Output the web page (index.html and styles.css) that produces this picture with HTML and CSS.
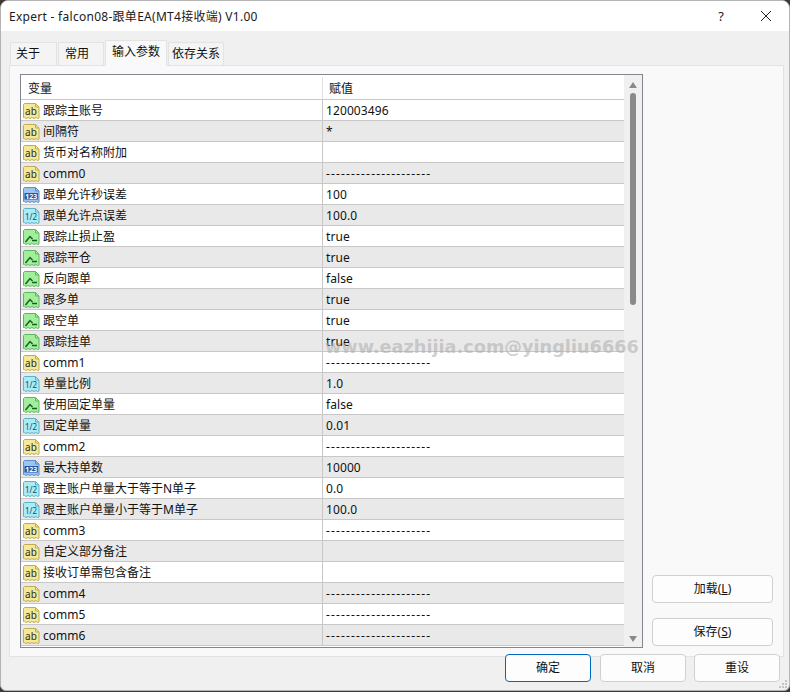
FILE: index.html
```html
<!DOCTYPE html>
<html lang="zh">
<head>
<meta charset="utf-8">
<title>Expert</title>
<link rel="stylesheet" href="styles.css">
</head>
<body>
<svg class="defs" width="0" height="0" aria-hidden="true">
  <defs>
    <symbol id="doc" viewBox="0 0 17 17" overflow="visible">
      <path d="M0.500 1.500L1.500 0.500H12.500L16 4V15L14.500 15.500L13 14.500L11 15.500L9 14.500L7 15.500L5 14.500L3 15.500L1.500 14.500H0.500Z"/>
      <path class="fold" d="M12.500 0.500V4H16"/>
    </symbol>
    <symbol id="curve" viewBox="0 0 17 17" overflow="visible">
      <path class="stroke" d="M2.500 13L7 7.500L9.500 10"/>
      <path class="stroke" d="M9 11.500H14"/>
    </symbol>
  </defs>
</svg>
<div class="window">
  <header class="titlebar">
    <span class="title">Expert - falcon08-跟单EA(MT4接收端) V1.00</span>
    <span class="help">?</span>
    <svg class="close" width="12" height="12" viewBox="0 0 12 12"><path d="M1 1L11 11M11 1L1 11" stroke="#222" stroke-width="1" fill="none"/></svg>
  </header>
  <nav class="tabs">
    <span class="tab tab-a">关于</span>
    <span class="tab tab-b">常用</span>
    <span class="tab tab-active">输入参数</span>
    <span class="tab tab-d">依存关系</span>
  </nav>
  <main class="panel">
    <section class="list">
      <div class="grid">
        <div class="head"><span class="h-name">变量</span><span class="h-value">赋值</span></div>
        <div class="row"><svg class="ic ic-ab" viewBox="0 0 17 17"><use href="#doc"/><text x="8" y="11.500">ab</text></svg><span class="name">跟踪主账号</span><span class="val">120003496</span></div>
        <div class="row"><svg class="ic ic-ab" viewBox="0 0 17 17"><use href="#doc"/><text x="8" y="11.500">ab</text></svg><span class="name">间隔符</span><span class="val">*</span></div>
        <div class="row"><svg class="ic ic-ab" viewBox="0 0 17 17"><use href="#doc"/><text x="8" y="11.500">ab</text></svg><span class="name">货币对名称附加</span><span class="val"></span></div>
        <div class="row"><svg class="ic ic-ab" viewBox="0 0 17 17"><use href="#doc"/><text x="8" y="11.500">ab</text></svg><span class="name">comm0</span><span class="val dash">---------------------</span></div>
        <div class="row"><svg class="ic ic-int" viewBox="0 0 17 17"><use href="#doc"/><rect class="band" x="1.500" y="6" width="13.500" height="6.500"/><text x="8.200" y="11.500">123</text></svg><span class="name">跟单允许秒误差</span><span class="val">100</span></div>
        <div class="row"><svg class="ic ic-dbl" viewBox="0 0 17 17"><use href="#doc"/><text x="8" y="11.500">1/2</text></svg><span class="name">跟单允许点误差</span><span class="val">100.0</span></div>
        <div class="row"><svg class="ic ic-bool" viewBox="0 0 17 17"><use href="#doc"/><use href="#curve"/></svg><span class="name">跟踪止损止盈</span><span class="val">true</span></div>
        <div class="row"><svg class="ic ic-bool" viewBox="0 0 17 17"><use href="#doc"/><use href="#curve"/></svg><span class="name">跟踪平仓</span><span class="val">true</span></div>
        <div class="row"><svg class="ic ic-bool" viewBox="0 0 17 17"><use href="#doc"/><use href="#curve"/></svg><span class="name">反向跟单</span><span class="val">false</span></div>
        <div class="row"><svg class="ic ic-bool" viewBox="0 0 17 17"><use href="#doc"/><use href="#curve"/></svg><span class="name">跟多单</span><span class="val">true</span></div>
        <div class="row"><svg class="ic ic-bool" viewBox="0 0 17 17"><use href="#doc"/><use href="#curve"/></svg><span class="name">跟空单</span><span class="val">true</span></div>
        <div class="row"><svg class="ic ic-bool" viewBox="0 0 17 17"><use href="#doc"/><use href="#curve"/></svg><span class="name">跟踪挂单</span><span class="val">true</span></div>
        <div class="row"><svg class="ic ic-ab" viewBox="0 0 17 17"><use href="#doc"/><text x="8" y="11.500">ab</text></svg><span class="name">comm1</span><span class="val dash">---------------------</span></div>
        <div class="row"><svg class="ic ic-dbl" viewBox="0 0 17 17"><use href="#doc"/><text x="8" y="11.500">1/2</text></svg><span class="name">单量比例</span><span class="val">1.0</span></div>
        <div class="row"><svg class="ic ic-bool" viewBox="0 0 17 17"><use href="#doc"/><use href="#curve"/></svg><span class="name">使用固定单量</span><span class="val">false</span></div>
        <div class="row"><svg class="ic ic-dbl" viewBox="0 0 17 17"><use href="#doc"/><text x="8" y="11.500">1/2</text></svg><span class="name">固定单量</span><span class="val">0.01</span></div>
        <div class="row"><svg class="ic ic-ab" viewBox="0 0 17 17"><use href="#doc"/><text x="8" y="11.500">ab</text></svg><span class="name">comm2</span><span class="val dash">---------------------</span></div>
        <div class="row"><svg class="ic ic-int" viewBox="0 0 17 17"><use href="#doc"/><rect class="band" x="1.500" y="6" width="13.500" height="6.500"/><text x="8.200" y="11.500">123</text></svg><span class="name">最大持单数</span><span class="val">10000</span></div>
        <div class="row"><svg class="ic ic-dbl" viewBox="0 0 17 17"><use href="#doc"/><text x="8" y="11.500">1/2</text></svg><span class="name">跟主账户单量大于等于N单子</span><span class="val">0.0</span></div>
        <div class="row"><svg class="ic ic-dbl" viewBox="0 0 17 17"><use href="#doc"/><text x="8" y="11.500">1/2</text></svg><span class="name">跟主账户单量小于等于M单子</span><span class="val">100.0</span></div>
        <div class="row"><svg class="ic ic-ab" viewBox="0 0 17 17"><use href="#doc"/><text x="8" y="11.500">ab</text></svg><span class="name">comm3</span><span class="val dash">---------------------</span></div>
        <div class="row"><svg class="ic ic-ab" viewBox="0 0 17 17"><use href="#doc"/><text x="8" y="11.500">ab</text></svg><span class="name">自定义部分备注</span><span class="val"></span></div>
        <div class="row"><svg class="ic ic-ab" viewBox="0 0 17 17"><use href="#doc"/><text x="8" y="11.500">ab</text></svg><span class="name">接收订单需包含备注</span><span class="val"></span></div>
        <div class="row"><svg class="ic ic-ab" viewBox="0 0 17 17"><use href="#doc"/><text x="8" y="11.500">ab</text></svg><span class="name">comm4</span><span class="val dash">---------------------</span></div>
        <div class="row"><svg class="ic ic-ab" viewBox="0 0 17 17"><use href="#doc"/><text x="8" y="11.500">ab</text></svg><span class="name">comm5</span><span class="val dash">---------------------</span></div>
        <div class="row"><svg class="ic ic-ab" viewBox="0 0 17 17"><use href="#doc"/><text x="8" y="11.500">ab</text></svg><span class="name">comm6</span><span class="val dash">---------------------</span></div>
      </div>
      <div class="scrollbar">
        <svg class="arrow" width="8" height="6" viewBox="0 0 8 6"><path d="M4 0L8 6H0Z"/></svg>
        <div class="track"><div class="thumb"></div></div>
        <svg class="arrow" width="8" height="6" viewBox="0 0 8 6"><path d="M0 0H8L4 6Z"/></svg>
      </div>
    </section>
    <aside class="side">
      <button class="btn btn-side">加载(<u>L</u>)</button>
      <button class="btn btn-side">保存(<u>S</u>)</button>
    </aside>
    <div class="watermark">www.eazhijia.com@yingliu6666</div>
  </main>
  <footer class="footer">
    <button class="btn btn-foot btn-primary">确定</button>
    <button class="btn btn-foot">取消</button>
    <button class="btn btn-foot">重设</button>
  </footer>
  <svg class="grip" width="9" height="9" viewBox="0 0 9 9"><path d="M6 0h2v2H6zM3 3h2v2H3zM6 3h2v2H6zM0 6h2v2H0zM3 6h2v2H3zM6 6h2v2H6z"/></svg>
</div>
</body>
</html>
```

FILE: styles.css
```css
* { box-sizing: border-box; }
html, body { margin: 0; padding: 0; }
body {
  width: 790px;
  height: 692px;
  overflow: hidden;
  background: #3a3a30;
  font-family: "Noto Sans", "Noto Sans CJK SC", sans-serif;
  font-size: 12px;
  color: #111;
}
.defs { display: block; height: 0; }
.window {
  position: relative;
  width: 790px;
  height: 691px;
  background: #f0f0f0;
  border: 1px solid #b4b4b4;
  border-radius: 8px 8px 6px 6px;
  display: flex;
  flex-direction: column;
  overflow: hidden;
}
.titlebar {
  height: 30px;
  flex: none;
  background: #fff;
  display: flex;
  align-items: center;
  padding: 0 0 1px 8px;
}
.title { font-size: 12px; letter-spacing: 0.28px; color: #1a1a1a; flex: 1; white-space: nowrap; }
.help { font-size: 13px; margin-right: 36px; color: #222; }
.close { margin-right: 17px; }
.tabs {
  height: 34px;
  flex: none;
  display: flex;
  align-items: flex-end;
  padding-left: 9px;
  gap: 1px;
  position: relative;
  z-index: 1;
}
.tab {
  height: 23px;
  background: #f4f4f4;
  border: 1px solid #e3e3e3;
  border-bottom: 0;
  display: flex;
  align-items: center;
  padding-left: 5px;
  line-height: 1;
}
.tab-a { width: 47px; }
.tab-b { width: 46px; padding-left: 6px; }
.tab-active {
  width: 62px;
  height: 26px;
  background: #f9f9f9;
  padding-left: 6px;
  margin-bottom: -1px;
  padding-bottom: 3px;
}
.tab-d { width: 56px; padding-left: 3px; }
.panel {
  position: relative;
  flex: none;
  height: 592px;
  width: 775px;
  margin-left: 8px;
  background: #f9f9f9;
  border: 1px solid #e3e3e3;
  padding: 8px 0 0 10px;
  display: flex;
  align-items: flex-start;
}
.list {
  width: 623px;
  height: 574px;
  flex: none;
  background: #fff;
  border: 1px solid #85858f;
  display: flex;
  overflow: hidden;
}
.grid { width: 603px; flex: none; }
.head {
  height: 25px;
  display: flex;
  align-items: center;
  border-bottom: 1px solid #c8c8c8;
  padding-top: 2px;
}
.h-name { width: 301px; padding-left: 7px; flex: none; }
.h-value { flex: 1; height: 100%; padding-left: 6px; border-left: 1px solid #e0e0e0; display: flex; align-items: center; }
.row {
  height: 21px;
  display: flex;
  align-items: center;
  border-bottom: 1px solid #c8c8c8;
  background: #fff;
}
.row:nth-child(odd) { background: #e9e9e9; }
.ic { width: 17px; height: 17px; flex: none; margin: 2px 0 0 2px; }
.ic text {
  font-family: "Noto Sans", sans-serif;
  text-anchor: middle;
  font-size: 10px;
  fill: #2b2b2b;
}
.fold { fill: none; }
.stroke { fill: none; stroke: #14601f; stroke-width: 1.5; }
.ic-ab use { fill: #f5e896; stroke: #c2ab55; stroke-width: 1; }
.ic-int use { fill: #9cc4ee; stroke: #5d8fc8; stroke-width: 1; }
.band { fill: #1f5aa8; }
.ic-int text { font-size: 7px; font-weight: 700; fill: #fff; }
.ic-dbl use { fill: #aeeaf3; stroke: #58b4c6; stroke-width: 1; }
.ic-dbl text { font-size: 8px; fill: #0d4f66; }
.ic-bool use { fill: #a2ee9c; stroke: #5cb860; stroke-width: 1; }
.name { width: 282px; flex: none; padding: 2px 0 0 3px; white-space: nowrap; line-height: 1; }
.val {
  flex: 1;
  height: 100%;
  padding: 2px 0 0 3px;
  border-left: 1px solid #c8c8c8;
  display: flex;
  align-items: center;
  white-space: nowrap;
  line-height: 1;
  letter-spacing: 0.1px;
}
.dash { letter-spacing: 1.15px; }
.scrollbar {
  flex: 1;
  background: #f0f0f0;
  display: flex;
  flex-direction: column;
  align-items: center;
  padding: 7px 0 5px;
}
.arrow { fill: #8a8a8a; flex: none; }
.track { flex: 1; width: 6px; padding-top: 5px; }
.thumb { width: 6px; height: 212px; background: #8a8a8a; border-radius: 3px; }
.side {
  width: 121px;
  margin-left: 9px;
  height: 572px;
  display: flex;
  flex-direction: column;
  justify-content: flex-end;
  gap: 15px;
  flex: none;
}
.btn {
  font: inherit;
  color: #111;
  height: 28px;
  background: #fdfdfd;
  border: 1px solid #d0d0d0;
  border-radius: 4px;
  padding: 0;
  line-height: 1;
}
.btn-side { width: 121px; }
.footer {
  display: flex;
  justify-content: flex-end;
  gap: 8px;
  padding-right: 9px;
  margin-top: -3px;
  position: relative;
  z-index: 1;
}
.btn-foot { width: 86px; }
.btn-primary { border-color: #0067c0; margin-right: 1px; }
.watermark {
  position: absolute;
  left: 315px;
  top: 271px;
  font-family: "DejaVu Sans", sans-serif;
  font-weight: 700;
  font-size: 17.7px;
  color: rgba(170, 170, 170, 0.55);
  white-space: nowrap;
  pointer-events: none;
}
.grip { position: absolute; right: 1px; bottom: 1px; fill: #c4c4c4; }
```
